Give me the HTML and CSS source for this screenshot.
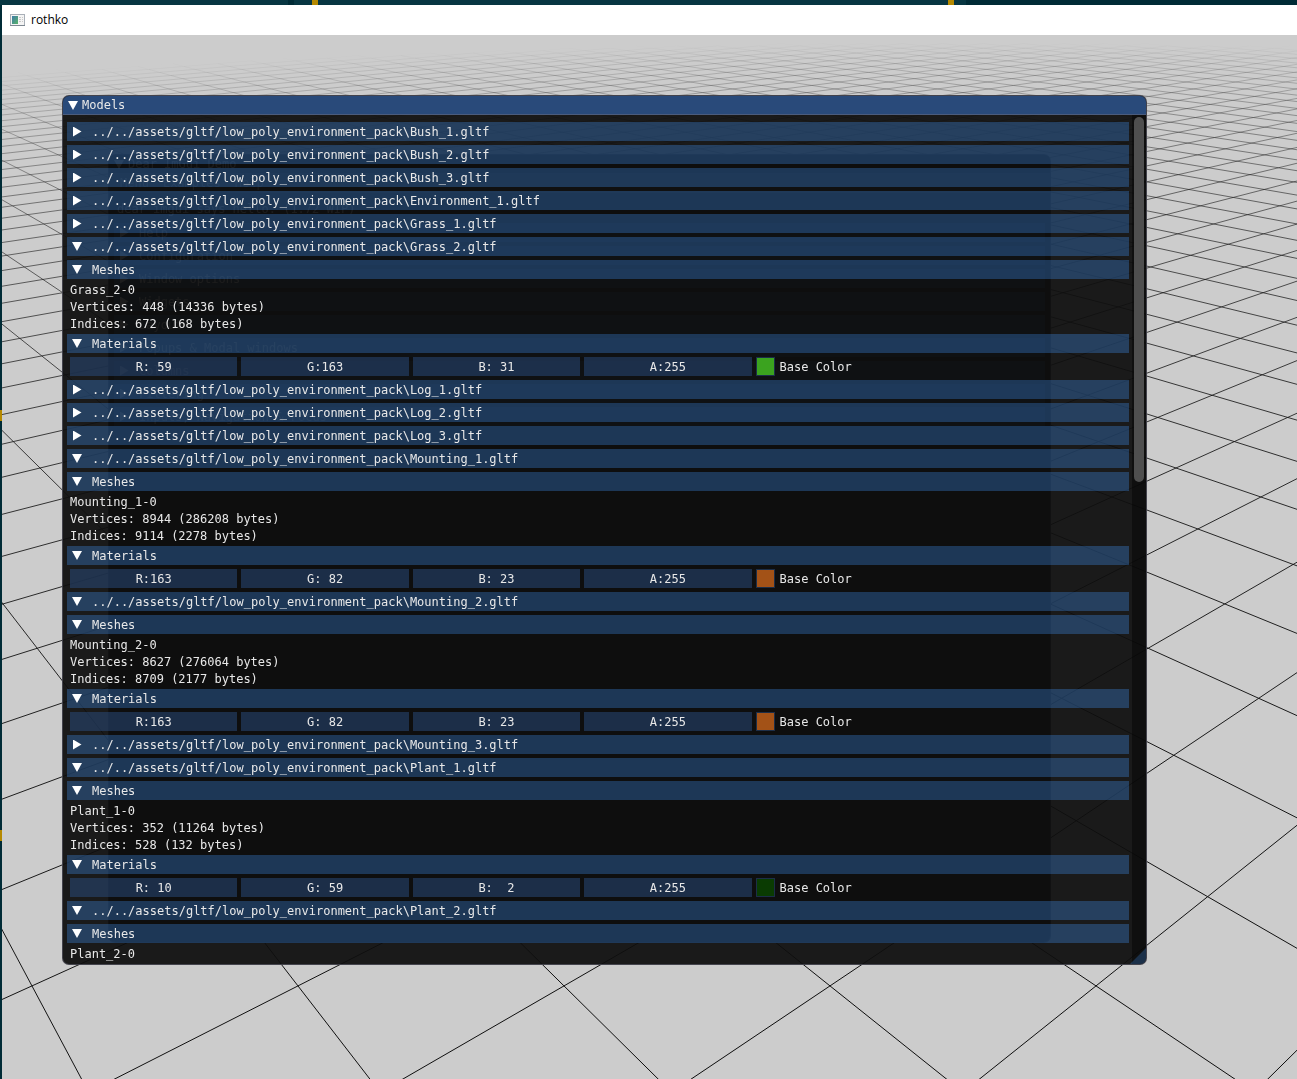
FILE: index.html
```
<!DOCTYPE html>
<html lang="en">
<head>
<meta charset="utf-8">
<title>rothko</title>
<link rel="stylesheet" href="styles.css">
<script src="app.js" defer></script>
</head>
<body>
<div class="app">
  <header class="titlebar">
    <svg class="app-icon" width="16" height="14" viewBox="0 0 16 14" aria-hidden="true">
      <defs><linearGradient id="pic" x1="0" y1="0" x2="1" y2="1"><stop offset="0" stop-color="#3f7ba8"/><stop offset="1" stop-color="#58b368"/></linearGradient></defs>
      <rect x=".5" y="1.5" width="14" height="11" fill="#f4f4f4" stroke="#a9b0b8"/>
      <rect x="2" y="3" width="6" height="8" fill="url(#pic)"/>
      <path d="M9 4.5h2M9 6.5h2M9 8.5h2M12 4.5h1M12 6.5h1M12 8.5h1" stroke="#c9c9c9"/>
      <path d="M0 12.5h15" stroke="#7d8791"/>
    </svg>
    <h1 class="app-name">rothko</h1>
  </header>
  <main class="viewport">
    <canvas class="ground"></canvas>
    <section class="window demo" aria-label="Dear ImGui Demo">
      <div class="window-title demo-title"><i class="arrow open"></i>Dear ImGui Demo</div>
      <div class="menu"><span>Menu</span><span>Examples</span><span>Help</span></div>
      <div class="demo-body">
        <p class="demo-hello">dear imgui says hello. (1.72 WIP)</p>
        <button class="header"><i class="arrow"></i>Help</button>
        <button class="header"><i class="arrow"></i>Configuration</button>
        <button class="header"><i class="arrow"></i>Window options</button>
        <button class="header"><i class="arrow"></i>Widgets</button>
        <button class="header"><i class="arrow"></i>Layout</button>
        <button class="header"><i class="arrow"></i>Popups &amp; Modal windows</button>
        <button class="header"><i class="arrow"></i>Columns</button>
        <button class="header"><i class="arrow"></i>Filtering</button>
        <button class="header"><i class="arrow"></i>Inputs, Navigation &amp; Focus</button>
      </div>
    </section>
    <section class="window models" aria-label="Models">
      <h2 class="window-title"><i class="arrow open"></i>Models</h2>
      <div class="body">
        <div class="list"></div>
        <div class="scrollbar"><div class="grab"></div></div>
      </div>
      <div class="grip"></div>
    </section>
  </main>
</div>
</body>
</html>
```
FILE: styles.css
```
* { box-sizing: border-box; margin: 0; }
body { background: #002b36; }
button, input { font: inherit; color: inherit; border: 0; padding: 0; border-radius: 0; }

.app {
  min-height: 100vh;
  display: flex;
  flex-direction: column;
  padding: 5px 0 0 2px;
  background:
    linear-gradient(#b58900, #b58900) 312px 0 / 6px 5px no-repeat,
    linear-gradient(#b58900, #b58900) 948px 0 / 6px 5px no-repeat,
    linear-gradient(#b58900, #b58900) 0 410px / 2px 11px no-repeat,
    linear-gradient(#b58900, #b58900) 0 830px / 2px 11px no-repeat,
    linear-gradient(#002b36, #002b36) 288px 0 / 6px 5px no-repeat,
    linear-gradient(#073642, #073642) 0 0 / 966px 5px no-repeat,
    #002b36;
}
.titlebar {
  height: 30px;
  display: flex;
  align-items: center;
  gap: 5px;
  padding-left: 8px;
  background: #fff;
}
.app-name { font: 400 12px/16px "Open Sans", "Noto Sans", sans-serif; color: #000; }

.viewport {
  position: relative;
  flex: 1;
  overflow: hidden;
  padding: 60px 150px 114px 60px;
  background: #ccc;
  color: #e8e8e8;
  font: 12px/13px "DejaVu Sans Mono", monospace;
}
.ground { position: absolute; left: 0; top: 0; width: 100%; height: 100%; }

.window {
  position: relative;
  border: 1px solid rgba(110, 110, 128, .5);
  border-radius: 7px;
  background: rgba(15, 15, 15, .94);
  overflow: hidden;
}
.demo { position: absolute; left: 106px; right: 246px; top: 119px; bottom: 136px; }
.window-title {
  display: flex;
  align-items: center;
  gap: 4px;
  height: 19px;
  padding: 1px 0 0 5px;
  font: inherit;
  background: #294a7a;
  border-bottom: 1px solid rgba(110, 110, 128, .5);
}
.demo-title { background: #0a0a0a; }
.menu { display: flex; gap: 14px; height: 19px; padding: 3px 11px; background: #242424; }
.demo-body { display: flex; flex-direction: column; gap: 4px; padding: 7px 5px; }
.demo-hello { padding: 3px; }

.arrow { width: 10px; height: 10px; background: #fff; clip-path: polygon(10% 0, 95% 50%, 10% 100%); }
.arrow.open { height: 9px; clip-path: polygon(0 0, 100% 0, 50% 100%); }

.body { display: flex; }
.list {
  flex: 1;
  min-width: 0;
  display: flex;
  flex-direction: column;
  gap: 4px;
  padding: 7px 3px 4px 4px;
}
.header {
  display: flex;
  align-items: center;
  gap: 10px;
  height: 19px;
  padding: 2px 0 0 5px;
  text-align: left;
  white-space: pre;
  background: rgba(66, 150, 250, .31);
}
.header .arrow { margin-bottom: 2px; }
.line { height: 13px; padding-left: 3px; line-height: 15px; white-space: pre; }
.color {
  display: flex;
  align-items: center;
  gap: 5px;
  padding: 0 3px;
}
.color-name { padding-top: 2px; }
.channels {
  width: calc(67% - 3px);
  display: grid;
  grid-template-columns: repeat(4, 1fr) 19px;
  gap: 4px;
}
.channel { width: 100%; min-width: 0; height: 19px; text-align: center; background: rgba(41, 74, 122, .54); }
.swatch { width: 19px; height: 19px; border: 1px solid rgba(41, 74, 122, .54); background-clip: padding-box; }

.scrollbar { width: 14px; padding: 2px; background: rgba(5, 5, 5, .53); }
.grab { width: 10px; height: calc(43% + 2px); border-radius: 5px; background: #4f4f4f; }
.grip {
  position: absolute;
  right: 0;
  bottom: 0;
  width: 16px;
  height: 16px;
  background: rgba(66, 150, 250, .25);
  clip-path: polygon(100% 0, 100% 100%, 0 100%);
}
```
FILE: app.js
```
const ASSETS = '../../assets/gltf/low_poly_environment_pack\\';

const models = [
  { name: 'Bush_1' },
  { name: 'Bush_2' },
  { name: 'Bush_3' },
  { name: 'Environment_1' },
  { name: 'Grass_1' },
  { name: 'Grass_2', vertices: '448 (14336 bytes)', indices: '672 (168 bytes)', color: [59, 163, 31, 255] },
  { name: 'Log_1' },
  { name: 'Log_2' },
  { name: 'Log_3' },
  { name: 'Mounting_1', vertices: '8944 (286208 bytes)', indices: '9114 (2278 bytes)', color: [163, 82, 23, 255] },
  { name: 'Mounting_2', vertices: '8627 (276064 bytes)', indices: '8709 (2177 bytes)', color: [163, 82, 23, 255] },
  { name: 'Mounting_3' },
  { name: 'Plant_1', vertices: '352 (11264 bytes)', indices: '528 (132 bytes)', color: [10, 59, 2, 255] },
  { name: 'Plant_2', partial: true },
];

const header = (text, open) =>
  `<button class="header" aria-expanded="${open}"><i class="arrow${open ? ' open' : ''}"></i>${text}</button>`;
const line = text => `<p class="line">${text}</p>`;

function colorRow(color) {
  const fields = color.map((value, i) => {
    const label = 'RGBA'[i];
    return `<input class="channel" type="text" aria-label="${label}" value="${label}:${String(value).padStart(3)}">`;
  }).join('');
  return `<div class="color"><div class="channels">${fields}` +
    `<div class="swatch" style="background-color: rgb(${color.slice(0, 3)})"></div></div><span class="color-name">Base Color</span></div>`;
}

function modelRows(model) {
  const open = Boolean(model.color || model.partial);
  let html = header(`${ASSETS}${model.name}.gltf`, open);
  if (open) html += header('Meshes', true) + line(`${model.name}-0`);
  if (model.color) {
    html += line(`Vertices: ${model.vertices}`) + line(`Indices: ${model.indices}`);
    html += header('Materials', true) + colorRow(model.color);
  }
  return html;
}

document.querySelector('.list').innerHTML = models.map(modelRows).join('');

// Perspective ground grid, seen along the diagonal of its cells.
const canvas = document.querySelector('.ground');
const VANISH_X = 961, HORIZON = -160, SCALE = 12720, SPREAD = 0.23945, NEAR = 11.45, FADE = 76;

function project(depth, side) {
  const h = SCALE / depth;
  return [VANISH_X + SPREAD * h * side, HORIZON + h];
}

function drawGround() {
  const w = canvas.width = canvas.clientWidth;
  const h = canvas.height = canvas.clientHeight;
  const ctx = canvas.getContext('2d');
  ctx.lineWidth = 1;
  for (const dir of [1, -1]) {
    for (let c = -80; c <= 80; c++) {
      const offset = c + 0.5;
      for (let n = -4; n < 66; n++) {
        const d0 = NEAR + n, d1 = d0 + 1;
        const m0 = dir * (n / 2 - offset), m1 = m0 + dir / 2;
        const fade = 1 - Math.hypot(d0 + 0.5, m0 + m1) / FADE;
        if (fade <= 0) continue;
        const [x0, y0] = project(d0, m0);
        const [x1, y1] = project(d1, m1);
        if (Math.max(x0, x1) < 0 || Math.min(x0, x1) > w || y1 > h) continue;
        ctx.strokeStyle = `rgba(0, 0, 0, ${Math.min(1, fade * 1.1)})`;
        ctx.beginPath();
        ctx.moveTo(x0, y0);
        ctx.lineTo(x1, y1);
        ctx.stroke();
      }
    }
  }
}

drawGround();
addEventListener('resize', drawGround);
```
